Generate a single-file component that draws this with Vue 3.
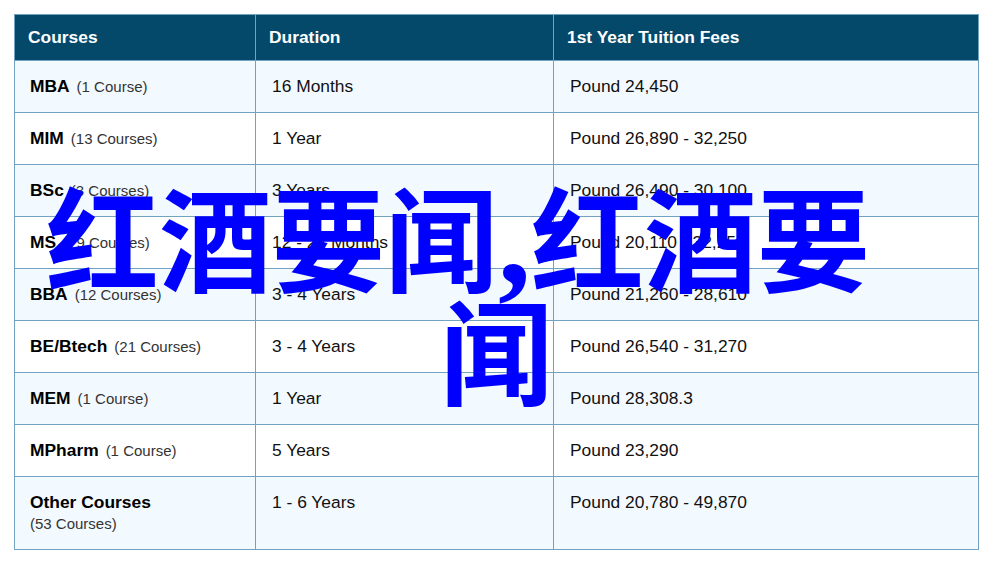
<script setup>
const rows = [
  { name: 'MBA', count: '(1 Course)', duration: '16 Months', fee: 'Pound 24,450' },
  { name: 'MIM', count: '(13 Courses)', duration: '1 Year', fee: 'Pound 26,890 - 32,250' },
  { name: 'BSc', count: '(3 Courses)', duration: '3 Years', fee: 'Pound 26,490 - 30,100' },
  { name: 'MS', count: '(79 Courses)', duration: '12 - 24 Months', fee: 'Pound 20,110 - 32,250' },
  { name: 'BBA', count: '(12 Courses)', duration: '3 - 4 Years', fee: 'Pound 21,260 - 28,610' },
  { name: 'BE/Btech', count: '(21 Courses)', duration: '3 - 4 Years', fee: 'Pound 26,540 - 31,270' },
  { name: 'MEM', count: '(1 Course)', duration: '1 Year', fee: 'Pound 28,308.3' },
  { name: 'MPharm', count: '(1 Course)', duration: '5 Years', fee: 'Pound 23,290' },
  { name: 'Other Courses', count: '(53 Courses)', duration: '1 - 6 Years', fee: 'Pound 20,780 - 49,870', block: true }
]
</script>

<template>
  <div class="page">
    <table class="fees">
      <colgroup>
        <col class="c1" />
        <col class="c2" />
        <col class="c3" />
      </colgroup>
      <thead>
        <tr>
          <th>Courses</th>
          <th>Duration</th>
          <th>1st Year Tuition Fees</th>
        </tr>
      </thead>
      <tbody>
        <tr v-for="r in rows" :key="r.name" :class="{ tall: r.block }">
          <td class="course">
            <b>{{ r.name }}</b>
            <span :class="['count', { block: r.block }]">{{ r.count }}</span>
          </td>
          <td>{{ r.duration }}</td>
          <td>{{ r.fee }}</td>
        </tr>
      </tbody>
    </table>
    <h1 class="overlay">
      <span class="line first">红酒要闻<span class="comma">,</span>红酒要</span>
      <span class="line second">闻</span>
    </h1>
  </div>
</template>

<style>
body { margin: 0; background: #fff; }
</style>

<style scoped>
.page {
  position: relative;
  width: 993px;
  height: 570px;
  padding: 14px 14px 0;
  box-sizing: border-box;
  overflow: hidden;
  font-family: "Liberation Sans", Arial, sans-serif;
}
.fees {
  border-collapse: collapse;
  table-layout: fixed;
  width: 964px;
}
.c1 { width: 241px; }
.c2 { width: 298px; }
.c3 { width: 425px; }
th, td {
  border: 1px solid #71a3c1;
  text-align: left;
  vertical-align: top;
  box-sizing: border-box;
}
th {
  height: 46px;
  padding: 12px 13px 0;
  background: #05496a;
  color: #fff;
  font-size: 17.4px;
  line-height: 20px;
  font-weight: 700;
}
td {
  height: 52px;
  padding: 15px 16px 0;
  color: #111;
  font-size: 17.4px;
  line-height: 20px;
}
td.course { padding-left: 15px; }
tbody tr:nth-child(odd) td { background: #f3faff; }
tbody tr:nth-child(even) td { background: #fff; }
tbody tr.tall td { height: 73px; }
.course b {
  color: #000;
  font-weight: 700;
  margin-right: 7px;
}
.count {
  color: #333;
  font-size: 15px;
}
.count.block {
  display: block;
  line-height: 24px;
}
.overlay {
  position: absolute;
  left: 0;
  top: 188px;
  width: 993px;
  margin: 0;
  color: #0000ff;
  font-family: "Liberation Serif", "Noto Sans CJK SC", serif;
  font-size: 113px;
  line-height: 113px;
  font-weight: 700;
}
.line { display: block; white-space: nowrap; }
.first { padding-left: 46px; }
.second { text-align: center; }
.comma { font-size: 132px; line-height: 0; }
</style>
